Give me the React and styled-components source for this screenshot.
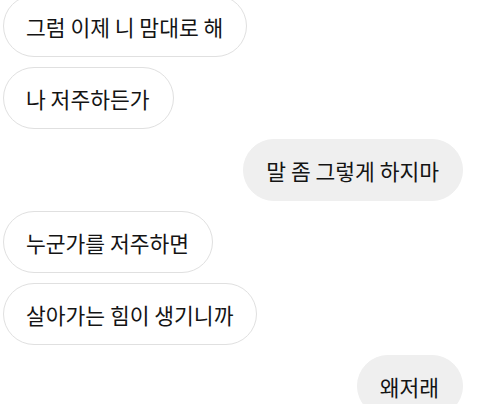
import styled, { createGlobalStyle } from "styled-components";

const GlobalStyle = createGlobalStyle`
  html, body {
    margin: 0;
    padding: 0;
    background: #ffffff;
  }
  body {
    font-family: "Noto Sans CJK KR", "Noto Sans", sans-serif;
    overflow: hidden;
  }
`

const Thread = styled.div`
  width: 480px;
  height: 404px;
  overflow: hidden;
`

// first bubble is cut off at the top of the screen
const Messages = styled.div`
  display: flex;
  flex-direction: column;
  gap: 10px;
  margin-top: -5px;
`

const Bubble = styled.div`
  align-self: ${({ mine }) => (mine ? "flex-end" : "flex-start")};
  margin: ${({ mine }) => (mine ? "0 17px 0 0" : "0 0 0 3px")};
  height: 62px;
  box-sizing: border-box;
  padding: 0 23px 0 22px;
  display: flex;
  align-items: center;
  border-radius: 31px;
  background: ${({ mine }) => (mine ? "#efefef" : "#ffffff")};
  border: 1.5px solid ${({ mine }) => (mine ? "#efefef" : "#e0e0e0")};
  color: #141414;
  font-size: 21.5px;
  white-space: nowrap;
`

const messages = [
  { text: "그럼 이제 니 맘대로 해", mine: false },
  { text: "나 저주하든가", mine: false },
  { text: "말 좀 그렇게 하지마", mine: true },
  { text: "누군가를 저주하면", mine: false },
  { text: "살아가는 힘이 생기니까", mine: false },
  { text: "왜저래", mine: true },
]

const App = () => {
  return (
    <>
      <GlobalStyle />
      <Thread>
        <Messages>
          {messages.map((m, i) => (
            <Bubble key={i} mine={m.mine}>{m.text}</Bubble>
          ))}
        </Messages>
      </Thread>
    </>
  )
}

export default App;
